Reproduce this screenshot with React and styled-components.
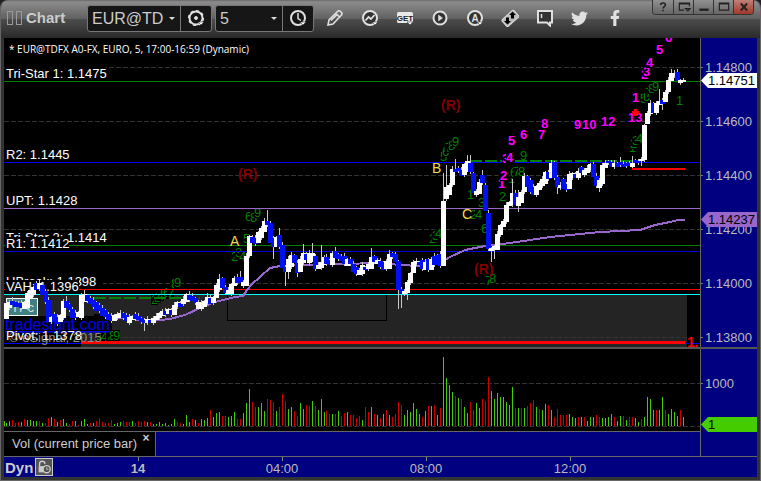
import React from "react";
import styled, { createGlobalStyle, css } from "styled-components";
import { FaTwitter, FaFacebookF } from "react-icons/fa";

const NAVY = "#000080";
const MAGENTA = "#ff00ff";
const GREEN = "#008000";
const PURPLE = "#9966cc";

// direction, body top, body bottom, then optional high and low
const candleRows = [
  "w303,319 w302,308 b301,305,297 b302,307 b303,307 b303,308 w302,309 w293,308 w290,298 w287,295",
  "b283,290 w283,289 b285,295 b291,302 b300,322 w317,322 b314,322 b317,324 w315,322 w301,318",
  "b301,308,296 b304,310 b309,318 b313,318 w312,317 w295,318 w294,302,290 b295,301 b298,304 b300,307",
  "b302,311 b305,311 b308,316 b310,317 b314,320 b316,321 w315,321 w314,318 w313,318 b313,318",
  "b315,321 w317,323 w316,320 b314,319 b316,320 b318,322 b320,323,318,331 w319,323 b320,323 w318,323",
  "w316,320 w313,318 w311,316 b311,315 w309,314 b310,315 w305,315 w302,307 b303,307 w299,304",
  "w294,302 b295,300,291 b296,301 b298,303 w302,309 w303,309 w301,307 w297,303,293 b298,304 w297,303",
  "w285,298 w279,290,274 b278,288 b287,293 w290,294 w284,294 w278,286 b277,283 b277,283,271 w282,286",
  "w256,286 w236,256 b237,243 b238,244 w232,243 w228,238 w221,232 b221,225,210 b223,243 b238,247,236,259",
  "w237,247 b235,247,228 b245,268 b267,272,265,286 w259,272,256,279 w255,267 b255,263 b263,273,260,277 w259,272 w253,263,244",
  "b254,260 w253,263 w253,262,243 b256,269 w265,269 w262,268,245 w257,265 b257,264 b260,265 w253,265",
  "b251,258,247 b254,259 b256,261 b256,264 w259,266 b259,264 b264,272 b267,274 w270,275 w265,274",
  "b267,270 w264,269 w257,269,248 b256,262 w260,264 b261,267 b262,270 w261,269 w254,269,250 b253,257",
  "b254,262 b261,290,260,309 b289,294,287,308 w291,294 w282,293,280,300 w273,283 w262,273 w261,264 b262,265 b260,269",
  "w262,270 b259,270 w259,270 b256,265 b255,265 b254,266,251 w201,266,173 w187,199,165 w185,195 w169,185",
  "b169,172,159 b168,171 b170,176 w164,175 w161,172,155 b163,172,155 b173,193 w191,195 w182,194 b175,183,170",
  "b185,211 b213,249 w248,251,247,262 w246,250,245,259 w234,250 w225,235 w221,227 w205,222 w202,206 w193,205,179",
  "b193,205 w197,206,190,212 w192,203 w176,192 b176,187 b180,192 b187,195 w186,195 w183,190 w179,186",
  "w172,184 b172,179 w163,178 b162,178 b177,187,175,194 w185,188 b179,189 b184,190 w174,189 w173,178",
  "b174,178 w171,178 b167,173 w170,175 w168,173 w164,170 b164,177 b176,186 w180,188,178,192 w165,184",
  "w163,168 b161,163 b162,167 w163,167 b163,167 b162,165,157 b164,167 b163,166 b163,166 w163,167,156",
  "b160,163 b161,163 w159,161,157,166 w125,160 w113,124 w103,114 b103,113 w103,113 w101,105,89 b100,104,98,110",
  "w92,102 w80,92 w73,81,69 w73,76,70 b72,81 w80,83 w80,82",
];

const volumeRows = [
  "g5 g3 g5 r6 r3 r4 g4 r7 g6 g6 g5 g5 r5 g3 r3 r8 g9 r7 g4 r6",
  "g7 g3 r2 r5 g5 r1 g5 g7 g2 r3 g3 r5 r8 r4 r3 r3 r6 g2 g3 g4",
  "r5 r4 r4 g5 r3 r5 r4 r5 g4 r4 g2 g2 g4 g2 g3 g1 g2 g7 r4 r3",
  "g2 g11 g4 r7 g6 r3 g7 g6 g8 r16 g9 g13 g14 r10 r10 g9 g10 g14 r7 r7",
  "g13 g23 g37 r24 r19 g19 g23 g15 r27 r26 r24 g15 r19 r32 r25 g17 g19 r15 r10 g23",
  "g17 r21 r20 g25 r20 g16 g27 g14 r15 r12 g12 r12 g15 r10 r13 g14 r11 r11 r8 r10",
  "g6 r19 r14 g19 r12 g11 r8 g12 r16 g11 r9 r12 r24 r21 g11 g16 g14 g23 g17 g12",
  "r9 g15 r20 g20 r21 g11 r18 g69 g48 g41 g34 r30 g28 r27 g19 g13 r24 r16 g23 g18",
  "r27 r25 r49 g35 g27 g33 g29 g29 g24 g21 g39 r18 g18 r18 g18 r20 r23 r26 g19 r17",
  "g16 g22 r21 g16 r9 r17 r11 r11 r11 g12 g9 g8 r9 g9 r9 g5 g9 g9 r11 r9",
  "g8 g8 g9 g12 r9 g5 g10 r10 g6 r9 r9 g8 g4 r7 g9 g29 g27 g16 r16 g16",
  "g29 r16 g12 g17 g14 g10 r16 g9",
];

const barX = (k) => 3 * k - (k > 108 ? 1 : 0);

const candles = candleRows
  .join(" ")
  .split(" ")
  .map((token, i) => {
    const [top, bottom, high, low] = token.slice(1).split(",").map(Number);
    return {
      x: barX(i + 2),
      up: token[0] === "w",
      top,
      bottom,
      high: high || top - (i % 3) - 1,
      low: low || bottom + ((i * 2) % 4),
    };
  });

const volumes = volumeRows
  .join(" ")
  .split(" ")
  .map((token, i) => ({
    x: i === 0 ? 4 : barX(i + 1),
    color: token[0] === "g" ? "#44cc00" : "#cc0000",
    size: Number(token.slice(1)),
  }));

const gridLines = [67, 121, 175, 229, 283, 337];

const levels = [
  { y: 81, color: "#008000" },
  { y: 162, color: "#0000ff" },
  { y: 208, color: PURPLE },
  { y: 245, color: "#008000" },
  { y: 251, color: "#0000dd" },
  { y: 289, color: "#ff0000" },
  { y: 294, color: "#00ffff" },
];

const levelLabels = [
  { text: "Tri-Star 1: 1.1475", y: 78, w: 101 },
  { text: "R2: 1.1445", y: 159, w: 64 },
  { text: "UPT: 1.1428", y: 205, w: 72 },
  { text: "Tri-Star 2: 1.1414", y: 242, w: 101 },
  { text: "R1: 1.1412", y: 248, w: 64 },
  { text: "UBreak: 1.1398", y: 286, w: 98 },
  { text: "VAH: 1.1396", y: 291, w: 74 },
];

const greenCounts = [
  ["2", 151, 304], ["3", 154, 302], ["4", 157, 300], ["5", 160, 298],
  ["6", 163, 297], ["7", 167, 298], ["8", 171, 288], ["9", 174, 287],
  ["2", 96, 340], ["4", 101, 341], ["7", 106, 340], ["8", 109, 340], ["9", 113, 340],
  ["2", 231, 261], ["3", 235, 257], ["4", 239, 261], ["5", 243, 243],
  ["6", 245, 221], ["8", 250, 222], ["9", 254, 217],
  ["2", 429, 243], ["3", 432, 240], ["4", 435, 238],
  ["5", 440, 161], ["6", 442, 156], ["7", 445, 152], ["8", 448, 150], ["9", 452, 146],
  ["1", 467, 199], ["3", 478, 207], ["2", 470, 219], ["4", 475, 219], ["6", 481, 233],
  ["2", 499, 201], ["1", 508, 183], ["6", 510, 177], ["7", 513, 176], ["8", 518, 176], ["9", 520, 160],
  ["7", 485, 285], ["8", 489, 283],
  ["1", 629, 152], ["2", 630, 148], ["3", 632, 145], ["4", 636, 143],
  ["5", 640, 103], ["6", 643, 101], ["7", 645, 97], ["8", 648, 93], ["9", 652, 91],
  ["1", 676, 105],
];

const magentaCounts = [
  ["1", 498, 188], ["2", 500, 180], ["3", 502, 163], ["4", 506, 162],
  ["5", 508, 145], ["6", 520, 139], ["7", 538, 139], ["8", 541, 128],
  ["9", 574, 129], ["10", 582, 129], ["12", 601, 126],
  ["13", 628, 122], ["1", 632, 102], ["2", 641, 79], ["3", 643, 76],
  ["4", 646, 67], ["5", 656, 54], ["6", 665, 42],
];

const average =
  "110,317 150,321 170,319 185,315 200,308 215,302 235,297 243,296 247,290 252,284 260,277 270,268 280,266 300,265 340,264 380,263 400,265 420,266 440,263 450,257 465,250 485,246 510,243 550,237 600,232 640,230 655,225 670,222 678,220 685,220";

function Counts({ items, color, bold }) {
  return items.map(([text, x, y], i) => (
    <g key={i}>
      <rect x={x} y={y - 10} width={text.length * 7} height={11} fill="#000" />
      <ChartText x={x} y={y} $bold={bold} fill={color}>
        {text}
      </ChartText>
    </g>
  ));
}

function PriceChart() {
  return (
    <PricePlot role="img" aria-label="EURO 5 minute price">
      {/* window coordinates start at 4,38 */}
      <g transform="translate(-4 -38)" shapeRendering="crispEdges">
        <rect x="4" y="295" width="683" height="52" fill="#242424" />
        {gridLines.map((y) => (
          <line key={y} x1="4" x2="110%" y1={y + 0.5} y2={y + 0.5} stroke="#333" strokeDasharray="5 2" />
        ))}
        <path d="M227.5 295V320.5H386.5V295" fill="none" stroke="#000" />
        <rect x="94" y="314" width="18" height="15" fill="#000" />
        <Counts items={greenCounts} color={GREEN} />
        {levels.map(({ y, color }) => (
          <line key={y} x1="4" x2="110%" y1={y + 0.5} y2={y + 0.5} stroke={color} />
        ))}
        <path d="M94 298H200M470 161H632" stroke={GREEN} strokeWidth="2" strokeDasharray="12 3" />
        <rect x="4" y="316" width="108" height="15" fill="#000" />
        <rect x="4" y="331" width="77" height="16" fill="#000" />
        <rect x="6.5" y="298.5" width="31" height="17" fill="#408080" stroke="#fff" />
        <ChartText x="11" y="312" fill="#ddd">TPc</ChartText>
        <a href="#tradesight">
          <ChartText x="5" y="330" $size={16} fill="#0000f0" textDecoration="underline">
            tradesight.com
          </ChartText>
        </a>
        {levelLabels.map(({ text, y, w }) => (
          <g key={text}>
            <rect x="5" y={y - 11} width={w} height="13" fill="#000" />
            <ChartText x="6" y={y} fill="#fff">{text}</ChartText>
          </g>
        ))}
        <polyline points={average} fill="none" stroke={PURPLE} strokeWidth="2" />
        {candles.map((c) => (
          <g key={c.x}>
            <path d={`M${c.x + 0.5} ${c.high}V${c.low}`} stroke="#c8c8c8" />
            <rect
              x={c.x - 2}
              y={c.top}
              width="5"
              height={c.bottom - c.top}
              fill={c.up ? "#fff" : "#0010f0"}
            />
          </g>
        ))}
        <path d="M632 169H685" stroke="#f00" strokeWidth="2" />
        <rect x="687" y="335" width="20" height="12" fill="#000" />
        <path d="M4 343.5H800" stroke="#0000ff" />
        <path d="M81 342H685" stroke="#f00" strokeWidth="3" />
        <ChartText x="687" y="347" $bold $size={14} fill="#f00">1.</ChartText>
        <ChartText x="9" y="342" fill="#909090">© eSignal, 2015</ChartText>
        <ChartText x="6" y="340" fill="#fff">Pivot: 1.1378</ChartText>
        <Counts items={magentaCounts} color={MAGENTA} bold />
        <path d="M634 109h3v2h2v3h-2v2h-3v-2h-2v-3h2z" fill="#f00" />
        {[[238, 179], [441, 110], [474, 274]].map(([x, y]) => (
          <ChartText key={x} x={x} y={y} $bold $size={14} fill="#800000">(R)</ChartText>
        ))}
        {[["A", 230, 246], ["B", 432, 173], ["C", 462, 219]].map(([t, x, y]) => (
          <ChartText key={t} x={x} y={y} $size={14} fill="#f0d850">{t}</ChartText>
        ))}
        <Heading x="9" y="53">* EUR@TDFX A0-FX, EURO, 5, 17:00-16:59 (Dynamic)</Heading>
      </g>
    </PricePlot>
  );
}

function VolumeChart() {
  return (
    <VolumePlot role="img" aria-label="Volume">
      <g transform="translate(-4 -349)" shapeRendering="crispEdges">
        {[383, 426].map((y) => (
          <line key={y} x1="4" x2="110%" y1={y + 0.5} y2={y + 0.5} stroke="#333" strokeDasharray="5 2" />
        ))}
        {volumes.map((v) => (
          <rect key={v.x} x={v.x} y={426 - v.size} width="1" height={v.size} fill={v.color} />
        ))}
      </g>
    </VolumePlot>
  );
}

const Corner = () => <path d="M11 13h6l-3 3z" fill="#fff" stroke="#333" strokeWidth="0.6" />;

const icons = {
  gear: (
    <>
      <circle cx="9" cy="9" r="6.5" strokeWidth="2" />
      <circle cx="9" cy="9" r="7.3" strokeWidth="1.6" strokeDasharray="3 2.7" />
      <circle cx="9" cy="9" r="1.5" fill="currentColor" />
      <Corner />
    </>
  ),
  clock: (
    <>
      <circle cx="9" cy="9" r="7" strokeWidth="2" />
      <path d="M9 4v5.5l3 2" strokeWidth="1.5" />
      <Corner />
    </>
  ),
  pencil: (
    <path d="M2 16l1-5 8.5-8.5c1-1 2-1 3 0l.8.8c1 1 1 2 0 3L7 15zM10 4.500l3.500 3.500M5 11.500l6-6" strokeWidth="1.6" />
  ),
  trend: (
    <>
      <circle cx="9" cy="9" r="7" fill="#333" strokeWidth="2" />
      <path d="M4.5 11.5l3-3.5 2.5 2 3.5-4" strokeWidth="1.8" />
      <Corner />
    </>
  ),
  get: (
    <>
      <rect x="1" y="3" width="16" height="11" rx="1.5" fill="#e8e8e8" stroke="none" />
      <text x="9" y="12" textAnchor="middle" fontSize="8" fontWeight="700" fill="#222" stroke="none">
        GET
      </text>
      <Corner />
    </>
  ),
  play: (
    <>
      <circle cx="9" cy="9" r="6.5" fill="#333" strokeWidth="2" />
      <path d="M7.5 6l4 3-4 3z" fill="currentColor" strokeWidth="0.5" />
    </>
  ),
  auto: (
    <>
      <circle cx="9" cy="9" r="7" fill="#333" strokeWidth="2" />
      <text x="9" y="13" textAnchor="middle" fontSize="10" fontWeight="700" fill="currentColor" stroke="none">
        A
      </text>
      <Corner />
    </>
  ),
  trade: (
    <>
      <rect x="1" y="5" width="16" height="9" rx="1.5" transform="rotate(-42 9 9)" fill="#bbb" stroke="#e0e0e0" />
      <path d="M11.5 2.500l3.500 3.500h-2v3.500h-3V6H8zM6.500 15.500l-3.500-3.500h2V8.500h3V12h2z" fill="#000" stroke="none" />
    </>
  ),
  note: (
    <>
      <path d="M2 2h14v11.5h-2V16.500L11 13.500H2z" fill="#333" strokeWidth="2" />
      <path d="M5.5 5v4" strokeWidth="1.5" />
    </>
  ),
  help: <path d="M6 6.5C6 3 12 3 12 6.500c0 2-3 2.200-3 4.500M9 12.500v2" strokeWidth="2" />,
  dock: <path d="M16 8V4H3v9h6M3 5h13M11 11h6l-3 3z" strokeWidth="1.5" />,
  minimize: <path d="M3 12.5h12" strokeWidth="3" />,
  maximize: <path d="M3 4h12v9H3zM3 5h12" strokeWidth="1.5" />,
  close: <path d="M5 4.5l8 9M13 4.500l-8 9" strokeWidth="2.5" />,
  lock: (
    <>
      <path d="M4 8V5.5a3 3 0 0 1 6 0" strokeWidth="1.5" />
      <rect x="3" y="8" width="7" height="7" fill="currentColor" stroke="none" />
      <circle cx="12" cy="11.5" r="4" fill="#555" strokeWidth="1.5" />
      <path d="M12 9.5v2h2" strokeWidth="1" />
    </>
  ),
};

function Icon({ name, size = 18 }) {
  return (
    <svg width={size} height={size} viewBox="0 0 18 18" fill="none" stroke="currentColor" aria-hidden="true">
      {icons[name]}
    </svg>
  );
}

const tools = [
  ["Draw", <Icon name="pencil" />],
  ["Studies", <Icon name="trend" />],
  ["Get study", <Icon name="get" />],
  ["Playback", <Icon name="play" />],
  ["Alerts", <Icon name="auto" />],
  ["Trade", <Icon name="trade" />],
  ["Note", <Icon name="note" />],
  ["Twitter", <FaTwitter size={17} />],
  ["Facebook", <FaFacebookF size={16} />],
];

export default function App() {
  return (
    <Window>
      <GlobalStyle />
      <Toolbar>
        <Grip />
        <Grip />
        <Title>Chart</Title>
        <Field>
          <SelectBox $width={92}>
            <select aria-label="Symbol">
              <option>EUR@TD</option>
            </select>
          </SelectBox>
          <FieldButton aria-label="Symbol settings"><Icon name="gear" /></FieldButton>
        </Field>
        <Field>
          <SelectBox $width={66}>
            <select aria-label="Interval">
              <option>5</option>
            </select>
          </SelectBox>
          <FieldButton aria-label="Time template"><Icon name="clock" /></FieldButton>
        </Field>
        <Tools>
          {tools.map(([label, icon]) => (
            <ToolButton key={label} aria-label={label}>{icon}</ToolButton>
          ))}
        </Tools>
        <WindowButtons>
          {["help", "dock", "minimize", "maximize", "close"].map((name) => (
            <WindowButton key={name} aria-label={name} $danger={name === "close"}>
              <Icon name={name} size={14} />
            </WindowButton>
          ))}
        </WindowButtons>
      </Toolbar>
      <Body>
        <Pane>
          <PriceChart />
          <PriceAxis>
            {["1.14800", "1.14600", "1.14400", "1.14200", "1.14000", "1.13800"].map((p) => (
              <AxisLabel key={p}>{p}</AxisLabel>
            ))}
            <Tag $top={35} $bg="#fff">1.14751</Tag>
            <Tag $top={174} $bg={PURPLE}>1.14237</Tag>
          </PriceAxis>
        </Pane>
        <Divider />
        <Pane>
          <VolumeColumn>
            <VolumeChart />
            <Tabs>
              <Tab>
                Vol (current price bar)
                <TabClose aria-label="Close tab">×</TabClose>
              </Tab>
            </Tabs>
          </VolumeColumn>
          <VolumeAxis>
            <AxisLabel>1000</AxisLabel>
            <Tag $top={68} $bg="#44cc00">1</Tag>
          </VolumeAxis>
        </Pane>
        <TimeAxis>
          <Mode>
            Dyn
            <LockButton aria-label="Lock time"><Icon name="lock" size={16} /></LockButton>
          </Mode>
          <TimeLabel $bold>14</TimeLabel>
          <TimeLabel>04:00</TimeLabel>
          <TimeLabel>08:00</TimeLabel>
          <TimeLabel>12:00</TimeLabel>
        </TimeAxis>
      </Body>
    </Window>
  );
}

const GlobalStyle = createGlobalStyle`
  * {
    box-sizing: border-box;
  }
  body {
    margin: 0;
    background: #222;
    font-family: "Liberation Sans", Arial, sans-serif;
  }
  button, select {
    margin: 0;
    padding: 0;
    border: 0;
    background: none;
    color: inherit;
    font: inherit;
  }
`;

const Window = styled.div`
  min-height: 100vh;
  display: flex;
  flex-direction: column;
  background: #333;
  border: 1px solid #666;
  border-top: 0;
  border-radius: 8px 8px 0 0;
  overflow: hidden;
`;

const Toolbar = styled.header`
  height: 38px;
  display: flex;
  align-items: center;
  padding: 0 6px 2px;
  color: #e0e0e0;
  background: linear-gradient(#6a6a6a 0, #8c8c8c 2px, #606060 50%, #4c4c4c 51%, #2a2a2a 100%);
`;

const Grip = styled.span`
  width: 6px;
  height: 14px;
  margin-right: 3px;
  border: 1px solid #999;
`;

const Title = styled.h1`
  width: 62px;
  margin: 0;
  padding-left: 1px;
  font-size: 15px;
  line-height: 18px;
  color: #ccc;
`;

const Field = styled.div`
  height: 27px;
  display: flex;
  margin-right: 3px;
  border: 1px solid #777;
  border-radius: 3px;
  background: #161616;
`;

const SelectBox = styled.div`
  position: relative;
  width: ${(p) => p.$width}px;
  select {
    width: 100%;
    height: 100%;
    padding-left: 4px;
    appearance: none;
    font-size: 16px;
    color: #ccc;
  }
  &::after {
    content: "";
    position: absolute;
    right: 5px;
    top: 11px;
    border: 3px solid transparent;
    border-top-color: #ddd;
    pointer-events: none;
  }
`;

const center = css`
  display: flex;
  align-items: center;
  justify-content: center;
`;

const FieldButton = styled.button`
  ${center}
  width: 31px;
  border-left: 1px solid #777;
`;

const Tools = styled.nav`
  display: flex;
`;

const ToolButton = styled.button`
  ${center}
  width: 35px;
  height: 28px;
`;

const WindowButtons = styled.div`
  display: flex;
  align-self: flex-start;
  margin-left: auto;
  border: 1px solid #333;
  border-top: 0;
  border-radius: 0 0 4px 4px;
  overflow: hidden;
`;

const WindowButton = styled.button`
  ${center}
  width: 20px;
  height: 14px;
  color: #222;
  background: ${(p) =>
    p.$danger ? "linear-gradient(#c08078, #a03828)" : "linear-gradient(#909090, #666)"};
  & + & {
    border-left: 1px solid #333;
  }
`;

const Body = styled.main`
  flex: 1;
  display: flex;
  flex-direction: column;
  margin: 0 3px 3px;
`;

const Pane = styled.section`
  display: flex;
`;

const PricePlot = styled.svg`
  flex: 1;
  min-width: 0;
  height: 309px;
  background: #000;
`;

const VolumeColumn = styled.div`
  flex: 1;
  min-width: 0;
`;

const VolumePlot = styled.svg`
  display: block;
  width: 100%;
  height: 82px;
  background: #000;
`;

const ChartText = styled.text`
  font-size: ${(p) => p.$size || 13}px;
  font-weight: ${(p) => (p.$bold ? 700 : 400)};
`;

const Heading = styled.text`
  font-family: "Open Sans", sans-serif;
  font-size: 10px;
  fill: #fff;
`;

const Divider = styled.hr`
  width: 100%;
  height: 2px;
  margin: 0;
  border: 0;
  background: #555;
`;

const Axis = styled.div`
  position: relative;
  width: 57px;
  border-left: 1px solid #666;
  background: ${NAVY};
  color: #bbb;
  font-size: 13px;
`;

const PriceAxis = styled(Axis)`
  height: 309px;
  padding-top: 2px;
`;

const VolumeAxis = styled(Axis)`
  padding-top: 7px;
`;

const AxisLabel = styled.div`
  height: 54px;
  display: flex;
  align-items: center;
  gap: 2px;
  &::before {
    content: "";
    width: 2px;
    height: 1px;
    background: #777;
  }
`;

const Tag = styled.div`
  position: absolute;
  top: ${(p) => p.$top}px;
  left: 0;
  right: 0;
  height: 15px;
  padding-left: 7px;
  line-height: 15px;
  color: #000;
  background: ${(p) => p.$bg};
  clip-path: polygon(0 50%, 7px 0, 100% 0, 100% 100%, 7px 100%);
`;

const Tabs = styled.div`
  height: 25px;
  display: flex;
  border-top: 1px solid #666;
  background: ${NAVY};
`;

const Tab = styled.div`
  display: flex;
  padding-left: 8px;
  border-right: 1px solid #666;
  background: #000;
  color: #ccc;
  font-size: 13px;
  line-height: 24px;
`;

const TabClose = styled.button`
  width: 18px;
  height: 12px;
  font-size: 12px;
  font-weight: 700;
  line-height: 12px;
`;

const TimeAxis = styled.footer`
  flex: 1;
  min-height: 21px;
  display: flex;
  border-top: 1px solid #666;
  background: ${NAVY};
  color: #bbb;
`;

const Mode = styled.div`
  width: 62px;
  display: flex;
  align-items: center;
  gap: 2px;
  padding-left: 1px;
  font-size: 15px;
  font-weight: 700;
  color: #ccc;
`;

const LockButton = styled.button`
  ${center}
  width: 18px;
  height: 18px;
  border: 1px solid #ccc;
  background: #555;
`;

const TimeLabel = styled.div`
  width: 144px;
  display: flex;
  flex-direction: column;
  align-items: center;
  font-size: 13px;
  line-height: 16px;
  font-weight: ${(p) => (p.$bold ? 700 : 400)};
  &::before {
    content: "";
    width: 1px;
    height: 4px;
    background: #888;
  }
`;
